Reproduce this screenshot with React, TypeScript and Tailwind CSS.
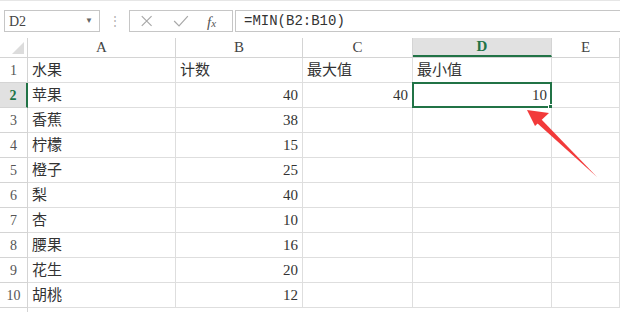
import React from "react";

const cols = [
  { key: "A", w: "w-[148px]" },
  { key: "B", w: "w-[127px]" },
  { key: "C", w: "w-[110px]" },
  { key: "D", w: "w-[139px]" },
  { key: "E", w: "flex-1" },
];

const rows: string[][] = [
  ["水果", "计数", "最大值", "最小值", ""],
  ["苹果", "40", "40", "10", ""],
  ["香蕉", "38", "", "", ""],
  ["柠檬", "15", "", "", ""],
  ["橙子", "25", "", "", ""],
  ["梨", "40", "", "", ""],
  ["杏", "10", "", "", ""],
  ["腰果", "16", "", "", ""],
  ["花生", "20", "", "", ""],
  ["胡桃", "12", "", "", ""],
];

const font = { fontFamily: '"Liberation Serif", "Noto Sans CJK SC", serif' };

function Cell({ text, width, row, col }: { text: string; width: string; row: number; col: number }) {
  const isNum = /^\d+$/.test(text);
  const selected = row === 1 && col === 3;
  return (
    <div
      className={`${width} relative h-full border-r border-b border-[#dedede] flex items-center text-[15px] text-[#333] ${
        isNum ? "justify-end pr-1" : "justify-start pl-1"
      }`}
    >
      {text}
      {selected && (
        <div className="absolute left-[-1px] top-[-1px] right-[-1px] bottom-[-1px] border-2 border-[#217346]">
          <div className="absolute right-[-3px] bottom-[-3px] w-[5px] h-[5px] bg-[#217346] border border-white" />
        </div>
      )}
    </div>
  );
}

export default function App() {
  return (
    <div className="w-[620px] h-[312px] overflow-hidden bg-white relative" style={font}>
      {/* formula bar */}
      <div className="h-[38px] flex items-start pt-[9px] border-t border-[#e6e6e6]">
        <div
          className="ml-[4px] w-[96px] h-[22px] border border-[#c6c6c6] flex items-center justify-between px-[4px] text-[14px] text-[#444]"
          style={{ fontFamily: '"Liberation Serif", serif' }}
        >
          <span>D2</span>
          <span className="text-[8px] text-[#666] mr-[2px]">▼</span>
        </div>
        <div className="w-[29px] h-[22px] flex items-center justify-center text-[#b0b0b0] text-[12px]">⋮</div>
        <div className="w-[104px] h-[22px] border border-[#c6c6c6] flex items-center text-[#a8a8a8] relative">
          <svg width="104" height="20" viewBox="0 0 104 20">
            <path d="M12 5 L22 15 M22 5 L12 15" stroke="#a8a8a8" strokeWidth="1.2" fill="none" />
            <path d="M45 10 L50 15 L59 5" stroke="#a8a8a8" strokeWidth="1.2" fill="none" />
          </svg>
          <span
            className="absolute left-[77px] top-[0px] italic text-[15px] text-[#555]"
            style={{ fontFamily: '"Liberation Serif", serif' }}
          >
            f<span className="text-[11px]">x</span>
          </span>
        </div>
        <div
          className="ml-[2px] flex-1 h-[22px] border border-[#c6c6c6] border-r-0 flex items-center pl-[8px] text-[14px] text-[#333]"
          style={{ fontFamily: '"Liberation Mono", monospace' }}
        >
          =MIN(B2:B10)
        </div>
      </div>

      {/* column headers */}
      <div className="h-[20px] flex border-b border-[#d4d4d4]">
        <div className="w-[28px] h-full border-r border-[#d4d4d4] relative">
          <div className="absolute right-[3px] bottom-[3px] w-0 h-0 border-l-[12px] border-l-transparent border-b-[12px] border-b-[#dcdcdc]" />
        </div>
        {cols.map((c) => (
          <div
            key={c.key}
            className={`${c.w} h-full flex items-center justify-center border-r border-[#d4d4d4] text-[15px] ${
              c.key === "D" ? "bg-[#e1e1e1] text-[#217346] font-bold border-b-2 border-b-[#217346]" : "text-[#444]"
            }`}
          >
            {c.key}
          </div>
        ))}
      </div>

      {/* rows */}
      {rows.map((r, i) => (
        <div key={i} className="h-[25px] flex">
          <div
            className={`w-[28px] h-full flex items-end justify-center pb-[1px] border-b border-r text-[14px] ${
              i === 1
                ? "bg-[#e1e1e1] text-[#217346] font-bold border-r-2 border-r-[#217346] border-b-[#d4d4d4]"
                : "text-[#555] border-[#d4d4d4]"
            }`}
          >
            {i + 1}
          </div>
          {r.map((t, j) => (
            <Cell key={j} text={t} width={cols[j].w} row={i} col={j} />
          ))}
        </div>
      ))}
      <div className="h-[25px] flex">
        <div className="w-[28px] h-full border-r border-[#d4d4d4]" />
      </div>

      {/* red arrow */}
      <svg className="absolute left-0 top-0 pointer-events-none" width="620" height="312">
        <path d="M597 177 L541 119 L537 123 Z" fill="#f23a3a" />
        <path d="M527 110 L549 113 L535 126 Z" fill="#f23a3a" />
      </svg>
    </div>
  );
}
